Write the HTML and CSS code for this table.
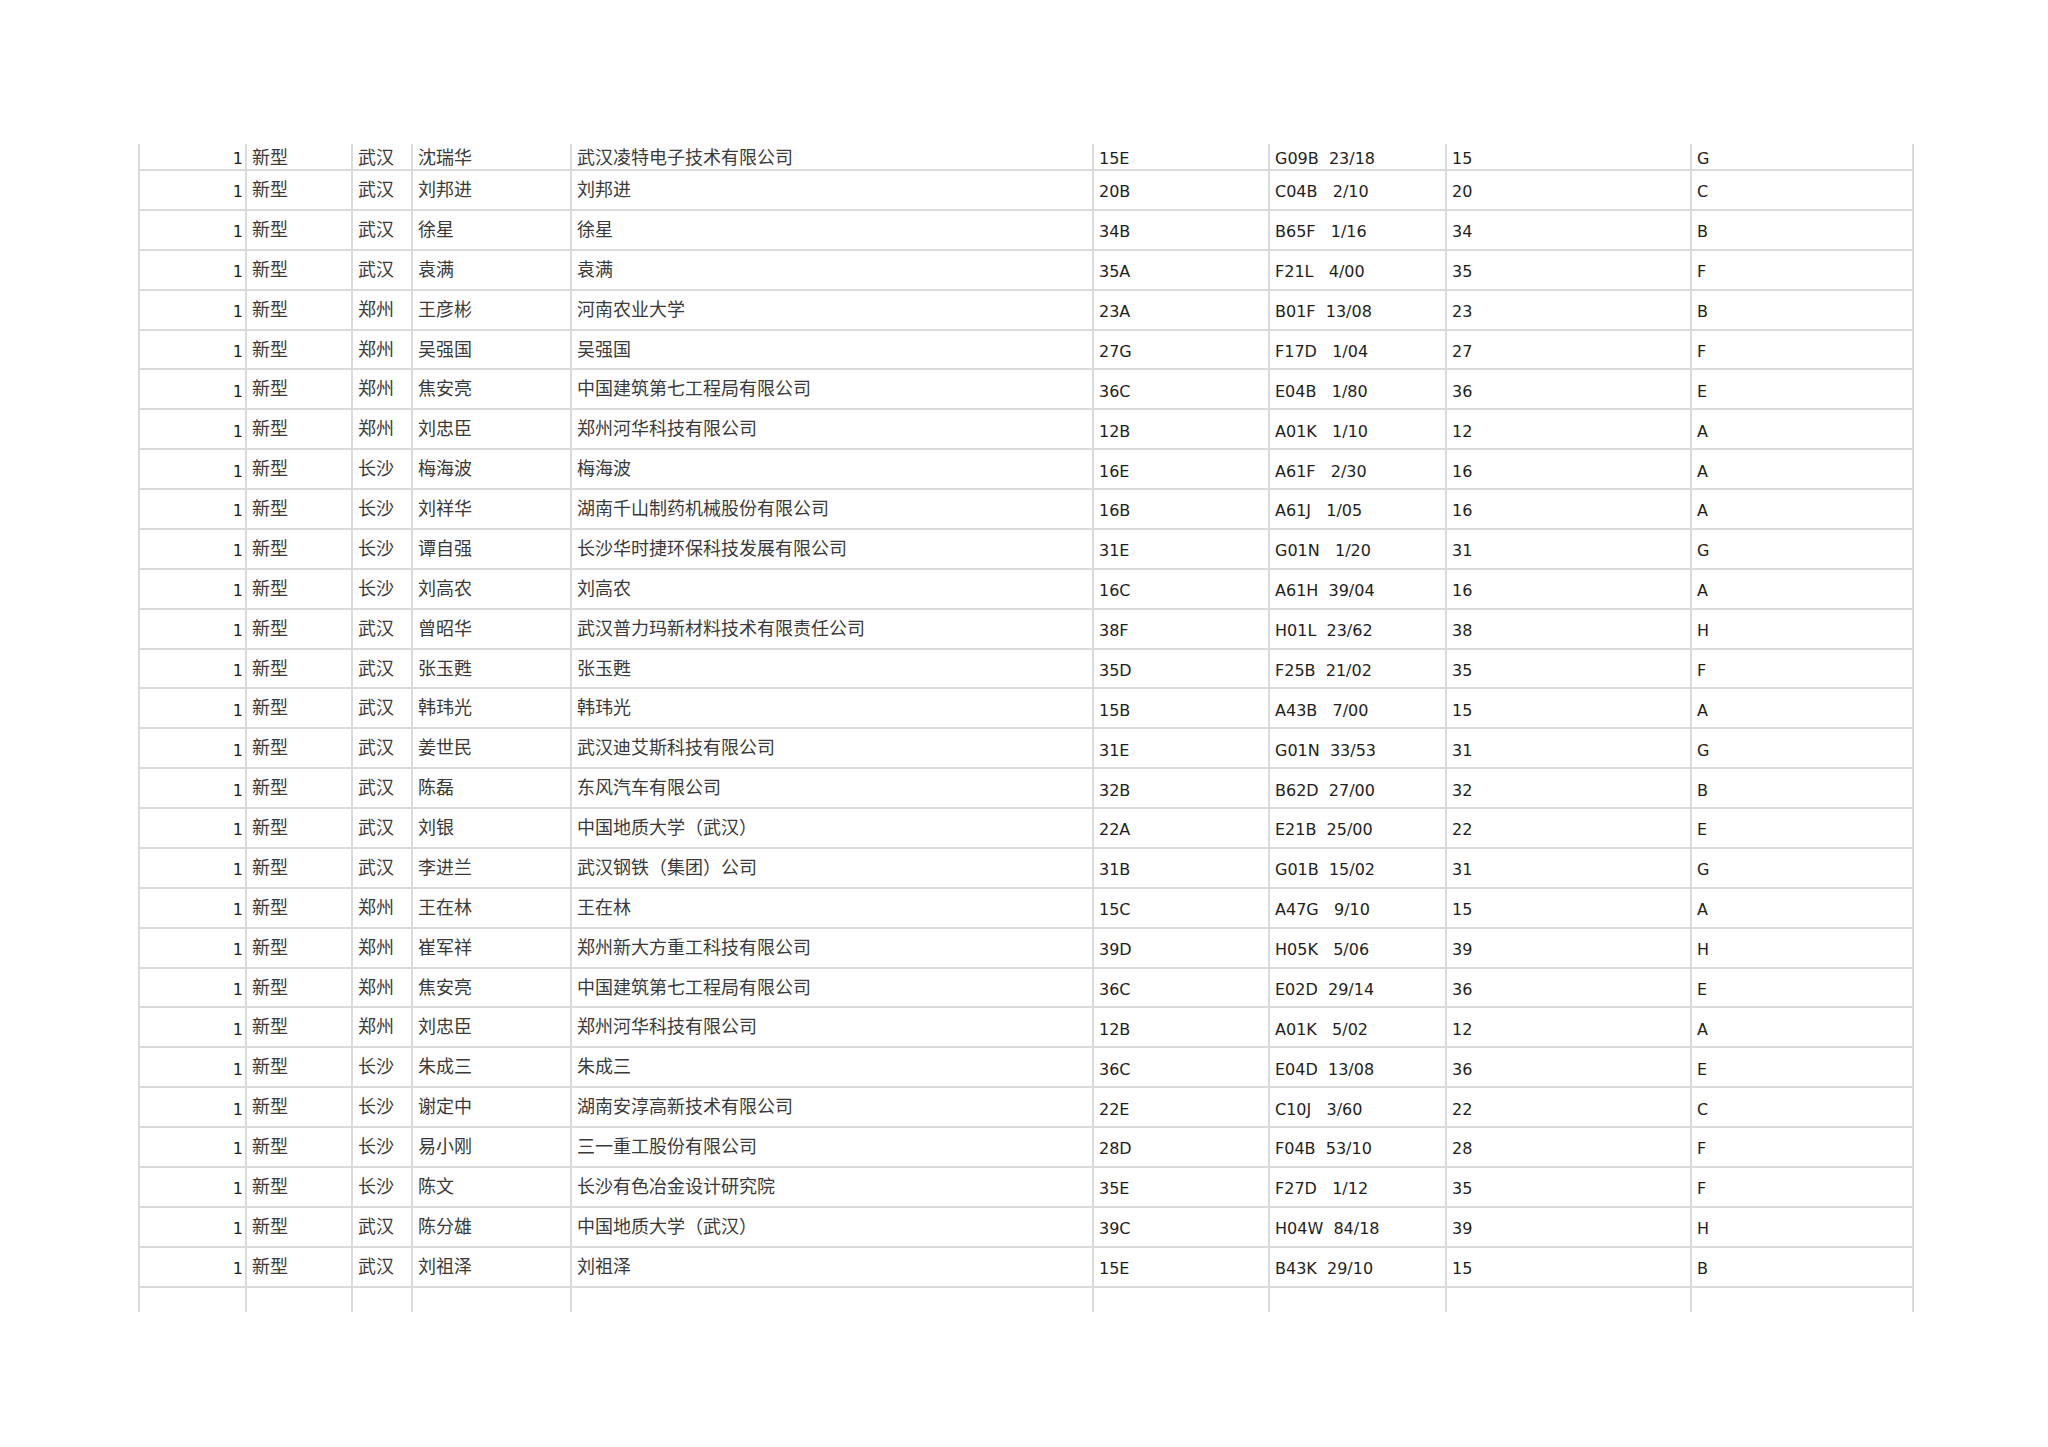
FILE: index.html
```html
<!DOCTYPE html>
<html lang="zh-CN">
<head>
<meta charset="utf-8">
<title>专利列表</title>
<link rel="stylesheet" href="styles.css">
</head>
<body>
<div class="sheet">
<div class="c n f">1</div><div class="c zh f">新型</div><div class="c zh f">武汉</div><div class="c zh f">沈瑞华</div><div class="c zh f">武汉凌特电子技术有限公司</div><div class="c f">15E</div><div class="c ipc f">G09B  23/18</div><div class="c f">15</div><div class="c f">G</div>
<div class="c n">1</div><div class="c zh">新型</div><div class="c zh">武汉</div><div class="c zh">刘邦进</div><div class="c zh">刘邦进</div><div class="c">20B</div><div class="c ipc">C04B   2/10</div><div class="c">20</div><div class="c">C</div>
<div class="c n">1</div><div class="c zh">新型</div><div class="c zh">武汉</div><div class="c zh">徐星</div><div class="c zh">徐星</div><div class="c">34B</div><div class="c ipc">B65F   1/16</div><div class="c">34</div><div class="c">B</div>
<div class="c n">1</div><div class="c zh">新型</div><div class="c zh">武汉</div><div class="c zh">袁满</div><div class="c zh">袁满</div><div class="c">35A</div><div class="c ipc">F21L   4/00</div><div class="c">35</div><div class="c">F</div>
<div class="c n">1</div><div class="c zh">新型</div><div class="c zh">郑州</div><div class="c zh">王彦彬</div><div class="c zh">河南农业大学</div><div class="c">23A</div><div class="c ipc">B01F  13/08</div><div class="c">23</div><div class="c">B</div>
<div class="c n">1</div><div class="c zh">新型</div><div class="c zh">郑州</div><div class="c zh">吴强国</div><div class="c zh">吴强国</div><div class="c">27G</div><div class="c ipc">F17D   1/04</div><div class="c">27</div><div class="c">F</div>
<div class="c n">1</div><div class="c zh">新型</div><div class="c zh">郑州</div><div class="c zh">焦安亮</div><div class="c zh">中国建筑第七工程局有限公司</div><div class="c">36C</div><div class="c ipc">E04B   1/80</div><div class="c">36</div><div class="c">E</div>
<div class="c n">1</div><div class="c zh">新型</div><div class="c zh">郑州</div><div class="c zh">刘忠臣</div><div class="c zh">郑州河华科技有限公司</div><div class="c">12B</div><div class="c ipc">A01K   1/10</div><div class="c">12</div><div class="c">A</div>
<div class="c n">1</div><div class="c zh">新型</div><div class="c zh">长沙</div><div class="c zh">梅海波</div><div class="c zh">梅海波</div><div class="c">16E</div><div class="c ipc">A61F   2/30</div><div class="c">16</div><div class="c">A</div>
<div class="c n">1</div><div class="c zh">新型</div><div class="c zh">长沙</div><div class="c zh">刘祥华</div><div class="c zh">湖南千山制药机械股份有限公司</div><div class="c">16B</div><div class="c ipc">A61J   1/05</div><div class="c">16</div><div class="c">A</div>
<div class="c n">1</div><div class="c zh">新型</div><div class="c zh">长沙</div><div class="c zh">谭自强</div><div class="c zh">长沙华时捷环保科技发展有限公司</div><div class="c">31E</div><div class="c ipc">G01N   1/20</div><div class="c">31</div><div class="c">G</div>
<div class="c n">1</div><div class="c zh">新型</div><div class="c zh">长沙</div><div class="c zh">刘高农</div><div class="c zh">刘高农</div><div class="c">16C</div><div class="c ipc">A61H  39/04</div><div class="c">16</div><div class="c">A</div>
<div class="c n">1</div><div class="c zh">新型</div><div class="c zh">武汉</div><div class="c zh">曾昭华</div><div class="c zh">武汉普力玛新材料技术有限责任公司</div><div class="c">38F</div><div class="c ipc">H01L  23/62</div><div class="c">38</div><div class="c">H</div>
<div class="c n">1</div><div class="c zh">新型</div><div class="c zh">武汉</div><div class="c zh">张玉甦</div><div class="c zh">张玉甦</div><div class="c">35D</div><div class="c ipc">F25B  21/02</div><div class="c">35</div><div class="c">F</div>
<div class="c n">1</div><div class="c zh">新型</div><div class="c zh">武汉</div><div class="c zh">韩玮光</div><div class="c zh">韩玮光</div><div class="c">15B</div><div class="c ipc">A43B   7/00</div><div class="c">15</div><div class="c">A</div>
<div class="c n">1</div><div class="c zh">新型</div><div class="c zh">武汉</div><div class="c zh">姜世民</div><div class="c zh">武汉迪艾斯科技有限公司</div><div class="c">31E</div><div class="c ipc">G01N  33/53</div><div class="c">31</div><div class="c">G</div>
<div class="c n">1</div><div class="c zh">新型</div><div class="c zh">武汉</div><div class="c zh">陈磊</div><div class="c zh">东风汽车有限公司</div><div class="c">32B</div><div class="c ipc">B62D  27/00</div><div class="c">32</div><div class="c">B</div>
<div class="c n">1</div><div class="c zh">新型</div><div class="c zh">武汉</div><div class="c zh">刘银</div><div class="c zh">中国地质大学（武汉）</div><div class="c">22A</div><div class="c ipc">E21B  25/00</div><div class="c">22</div><div class="c">E</div>
<div class="c n">1</div><div class="c zh">新型</div><div class="c zh">武汉</div><div class="c zh">李进兰</div><div class="c zh">武汉钢铁（集团）公司</div><div class="c">31B</div><div class="c ipc">G01B  15/02</div><div class="c">31</div><div class="c">G</div>
<div class="c n">1</div><div class="c zh">新型</div><div class="c zh">郑州</div><div class="c zh">王在林</div><div class="c zh">王在林</div><div class="c">15C</div><div class="c ipc">A47G   9/10</div><div class="c">15</div><div class="c">A</div>
<div class="c n">1</div><div class="c zh">新型</div><div class="c zh">郑州</div><div class="c zh">崔军祥</div><div class="c zh">郑州新大方重工科技有限公司</div><div class="c">39D</div><div class="c ipc">H05K   5/06</div><div class="c">39</div><div class="c">H</div>
<div class="c n">1</div><div class="c zh">新型</div><div class="c zh">郑州</div><div class="c zh">焦安亮</div><div class="c zh">中国建筑第七工程局有限公司</div><div class="c">36C</div><div class="c ipc">E02D  29/14</div><div class="c">36</div><div class="c">E</div>
<div class="c n">1</div><div class="c zh">新型</div><div class="c zh">郑州</div><div class="c zh">刘忠臣</div><div class="c zh">郑州河华科技有限公司</div><div class="c">12B</div><div class="c ipc">A01K   5/02</div><div class="c">12</div><div class="c">A</div>
<div class="c n">1</div><div class="c zh">新型</div><div class="c zh">长沙</div><div class="c zh">朱成三</div><div class="c zh">朱成三</div><div class="c">36C</div><div class="c ipc">E04D  13/08</div><div class="c">36</div><div class="c">E</div>
<div class="c n">1</div><div class="c zh">新型</div><div class="c zh">长沙</div><div class="c zh">谢定中</div><div class="c zh">湖南安淳高新技术有限公司</div><div class="c">22E</div><div class="c ipc">C10J   3/60</div><div class="c">22</div><div class="c">C</div>
<div class="c n">1</div><div class="c zh">新型</div><div class="c zh">长沙</div><div class="c zh">易小刚</div><div class="c zh">三一重工股份有限公司</div><div class="c">28D</div><div class="c ipc">F04B  53/10</div><div class="c">28</div><div class="c">F</div>
<div class="c n">1</div><div class="c zh">新型</div><div class="c zh">长沙</div><div class="c zh">陈文</div><div class="c zh">长沙有色冶金设计研究院</div><div class="c">35E</div><div class="c ipc">F27D   1/12</div><div class="c">35</div><div class="c">F</div>
<div class="c n">1</div><div class="c zh">新型</div><div class="c zh">武汉</div><div class="c zh">陈分雄</div><div class="c zh">中国地质大学（武汉）</div><div class="c">39C</div><div class="c ipc">H04W  84/18</div><div class="c">39</div><div class="c">H</div>
<div class="c n">1</div><div class="c zh">新型</div><div class="c zh">武汉</div><div class="c zh">刘祖泽</div><div class="c zh">刘祖泽</div><div class="c">15E</div><div class="c ipc">B43K  29/10</div><div class="c">15</div><div class="c">B</div>
<div class="c e"></div><div class="c e"></div><div class="c e"></div><div class="c e"></div><div class="c e"></div><div class="c e"></div><div class="c e"></div><div class="c e"></div><div class="c e"></div>
</div>
</body>
</html>
```

FILE: styles.css
```css
html, body {
  margin: 0;
  padding: 0;
  background: #ffffff;
}

.sheet {
  display: grid;
  grid-template-columns: 107px 106px 60px 159px 522px 176px 177px 245px 222px;
  grid-template-rows: 27px repeat(28, 39.88px) 24px;
  width: max-content;
  margin: 144px 0 0 138px;
  border-left: 2px solid #dadada;
}

.c {
  box-sizing: border-box;
  border-right: 2px solid #dadada;
  border-bottom: 2px solid #dadada;
  padding: 12.4px 0 0 5px;
  font-family: "DejaVu Sans", "Noto Sans CJK SC", sans-serif;
  font-size: 16px;
  line-height: 18px;
  color: #1e1e1e;
  white-space: nowrap;
}

.c.zh {
  font-family: "Noto Sans CJK SC", "DejaVu Sans", sans-serif;
  font-size: 18px;
  line-height: 24px;
  padding-top: 5px;
  padding-left: 5px;
  color: #3a3a3a;
}

.c.n {
  text-align: right;
  padding-left: 0;
  padding-right: 2px;
}

.c.ipc {
  white-space: pre;
}

.c.f {
  padding-top: 6.4px;
}

.c.zh.f {
  padding-top: 0;
}

.c.e {
  border-bottom: none;
}
```
